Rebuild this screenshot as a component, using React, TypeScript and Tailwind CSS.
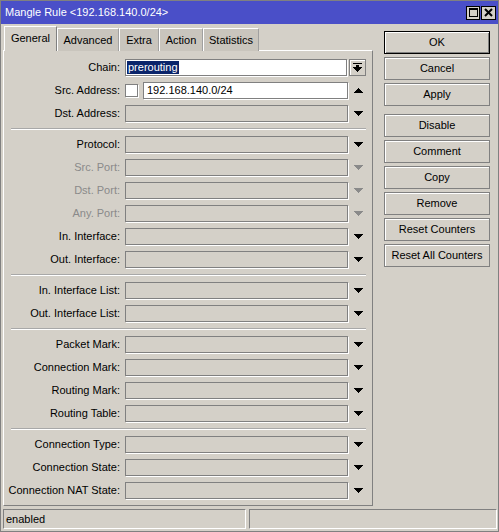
import React from "react";

type Row = { label: string; disabled?: boolean };

const sections: Row[][] = [
  [
    { label: "Protocol:" },
    { label: "Src. Port:", disabled: true },
    { label: "Dst. Port:", disabled: true },
    { label: "Any. Port:", disabled: true },
    { label: "In. Interface:" },
    { label: "Out. Interface:" },
  ],
  [{ label: "In. Interface List:" }, { label: "Out. Interface List:" }],
  [
    { label: "Packet Mark:" },
    { label: "Connection Mark:" },
    { label: "Routing Mark:" },
    { label: "Routing Table:" },
  ],
  [
    { label: "Connection Type:" },
    { label: "Connection State:" },
    { label: "Connection NAT State:" },
  ],
];

const tabs = [
  { name: "General", w: "w-[53px]" },
  { name: "Advanced", w: "w-[62px]" },
  { name: "Extra", w: "w-[40px]" },
  { name: "Action", w: "w-[44px]" },
  { name: "Statistics", w: "w-[56px]" },
];

const buttons = [
  "OK",
  "Cancel",
  "Apply",
  "Disable",
  "Comment",
  "Copy",
  "Remove",
  "Reset Counters",
  "Reset All Counters",
];

const Arrow: React.FC<{ up?: boolean; color?: string }> = ({ up, color = "#000" }) => (
  <svg width="9" height="5" viewBox="0 0 9 5" shapeRendering="crispEdges">
    <path
      d={
        up
          ? "M4 0h1v1H4z M3 1h3v1H3z M2 2h5v1H2z M1 3h7v1H1z M0 4h9v1H0z"
          : "M0 0h9v1H0z M1 1h7v1H1z M2 2h5v1H2z M3 3h3v1H3z M4 4h1v1H4z"
      }
      fill={color}
    />
  </svg>
);

const Label: React.FC<{ text: string; disabled?: boolean }> = ({ text, disabled }) => (
  <span
    className={`w-[116px] mr-[5px] text-right whitespace-nowrap leading-[17px] ${
      disabled ? "text-[#8a8a8a]" : "text-black"
    }`}
  >
    {text}
  </span>
);

const boxField = "h-[17px] border border-[#808080] shadow-[1px_1px_0_#fff]";

const ComboRow: React.FC<Row> = ({ label, disabled }) => (
  <div className="flex items-center h-[17px]">
    <Label text={label} disabled={disabled} />
    <div className={`${boxField} w-[223px] bg-[#d4d0c8]`} />
    <div className="w-[20px] flex justify-center">
      <Arrow color={disabled ? "#8a8a8a" : "#000"} />
    </div>
  </div>
);

const Separator = () => (
  <div className="ml-[7px] w-[355px] h-[2px] border-t border-[#a8a8a8] border-b border-b-white" />
);

export default function App() {
  return (
    <div
      className="w-[499px] h-[532px] bg-[#d4d0c8] border border-[#808080] flex flex-col text-[11px] text-black overflow-hidden"
      style={{ fontFamily: '"Liberation Sans", Arial, sans-serif' }}
    >
      {/* Title bar */}
      <div className="h-[23px] bg-[#4a4fc8] flex items-center pl-[4px] pr-[2px] shrink-0">
        <span className="text-white text-[11px] leading-none">Mangle Rule &lt;192.168.140.0/24&gt;</span>
        <div className="ml-auto flex gap-[1px]">
          <div className="w-[14px] h-[14px] bg-[#d4d0c8] border border-black flex items-center justify-center">
            <div className="w-[9px] h-[9px] border border-black border-t-2" />
          </div>
          <div className="w-[15px] h-[14px] bg-[#d4d0c8] border border-black flex items-center justify-center">
            <svg width="9" height="9" viewBox="0 0 9 9">
              <path d="M1 1L8 8M8 1L1 8" stroke="#000" strokeWidth="2" />
            </svg>
          </div>
        </div>
      </div>

      {/* Body */}
      <div className="flex flex-1 pt-[2px]">
        {/* Left: tabs and panel */}
        <div className="ml-[2px] w-[370px] flex flex-col">
          <div className="flex items-end h-[25px] pl-[1px] relative z-10 -mb-px">
            {tabs.map((t, i) =>
              i === 0 ? (
                <div
                  key={t.name}
                  className={`${t.w} h-[25px] bg-[#d4d0c8] border-l border-t border-white border-r border-r-[#808080] flex items-center justify-center pb-[2px]`}
                >
                  {t.name}
                </div>
              ) : (
                <div
                  key={t.name}
                  className={`${t.w} h-[23px] bg-[#c9c5bd] border-l border-t border-white border-r border-r-[#a0a0a0] flex items-center justify-center`}
                >
                  {t.name}
                </div>
              )
            )}
          </div>
          <div className="h-[456px] border-l border-t border-white border-r border-b border-r-[#808080] border-b-[#808080] pt-[8px] flex flex-col gap-[6px]">
            {/* Chain */}
            <div className="flex items-center h-[17px]">
              <Label text="Chain:" />
              <div className={`${boxField} w-[222px] bg-white flex items-center pl-[1px]`}>
                <span className="bg-[#0a246a] text-white leading-[13px] px-[1px]">prerouting</span>
              </div>
              <div className="ml-[2px] w-[17px] h-[17px] border border-[#808080] shadow-[inset_1px_1px_0_#fff] flex items-center justify-center">
                <svg width="9" height="9" viewBox="0 0 9 9" shapeRendering="crispEdges">
                  <path
                    d="M0 0h9v1H0z M3 2h3v2H3z M0 4h9v1H0z M1 5h7v1H1z M2 6h5v1H2z M3 7h3v1H3z M4 8h1v1H4z"
                    fill="#000"
                  />
                </svg>
              </div>
            </div>
            {/* Src. Address */}
            <div className="flex items-center h-[17px]">
              <Label text="Src. Address:" />
              <div className="w-[13px] h-[13px] bg-white border border-[#808080] shadow-[1px_1px_0_#fff]" />
              <div className={`${boxField} ml-[5px] w-[205px] bg-white flex items-center pl-[3px] leading-none`}>
                192.168.140.0/24
              </div>
              <div className="w-[20px] flex justify-center">
                <Arrow up />
              </div>
            </div>
            <ComboRow label="Dst. Address:" />
            {sections.map((sec, si) => (
              <React.Fragment key={si}>
                <Separator />
                {sec.map((r) => (
                  <ComboRow key={r.label} {...r} />
                ))}
              </React.Fragment>
            ))}
          </div>
        </div>

        {/* Right: buttons */}
        <div className="ml-[11px] w-[106px] pt-[5px] flex flex-col gap-[3px]">
          {buttons.map((b) => (
            <button
              key={b}
              className={`h-[23px] w-full bg-[#d4d0c8] text-[11px] text-black whitespace-nowrap ${
                b === "OK"
                  ? "border border-black shadow-[inset_1px_1px_0_#fff,inset_-1px_-1px_0_#808080]"
                  : "border border-[#808080] shadow-[inset_1px_1px_0_#fff]"
              } ${b === "Disable" ? "mt-[5px]" : ""}`}
            >
              {b}
            </button>
          ))}
        </div>
      </div>

      {/* Status bar */}
      <div className="flex gap-[3px] pl-[2px] pb-[2px] pt-[2px] shrink-0">
        <div className="w-[243px] h-[20px] border-l border-t border-[#808080] border-r border-b border-r-white border-b-white flex items-center pl-[2px]">
          enabled
        </div>
        <div className="w-[248px] h-[20px] border-l border-t border-[#808080] border-r border-b border-r-white border-b-white" />
      </div>
    </div>
  );
}
